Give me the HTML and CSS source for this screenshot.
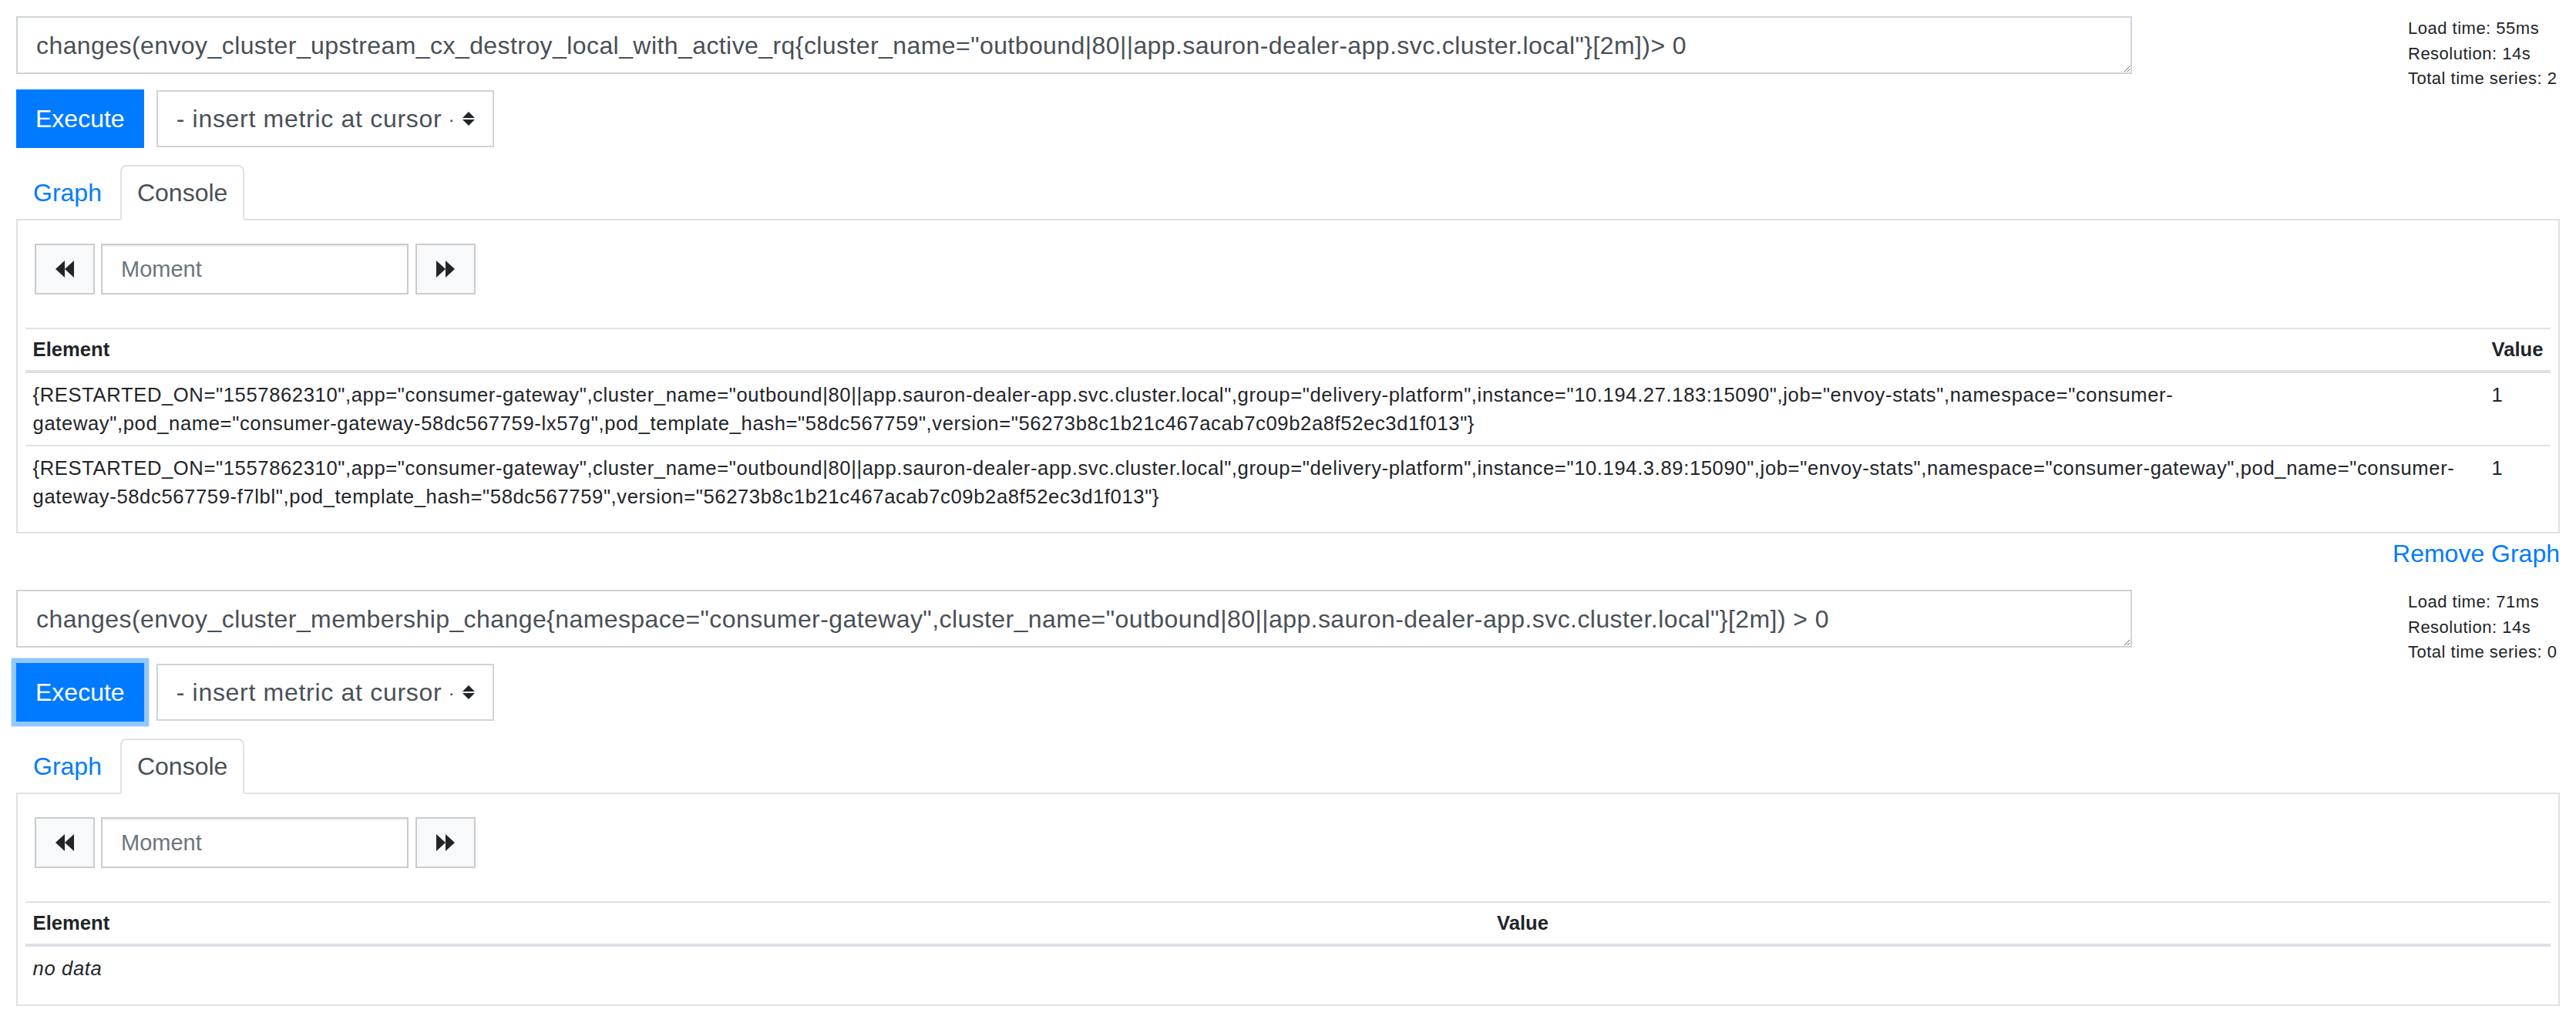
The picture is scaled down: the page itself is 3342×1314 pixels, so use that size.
FILE: index.html
```html
<!DOCTYPE html>
<html>
<head>
<meta charset="utf-8">
<title>Prometheus Time Series Collection and Processing Server</title>
<link rel="stylesheet" href="styles.css">
</head>
<body>
<div class="page">

  <div class="panel">
    <div class="query-row">
      <textarea class="expr" rows="1" spellcheck="false">changes(envoy_cluster_upstream_cx_destroy_local_with_active_rq{cluster_name="outbound|80||app.sauron-dealer-app.svc.cluster.local"}[2m])&gt; 0</textarea>
      <div class="stats">
        <div>Load time: 55ms</div>
        <div>Resolution: 14s</div>
        <div>Total time series: 2</div>
      </div>
    </div>
    <div class="controls">
      <button class="execute">Execute</button>
      <div class="metric-select">
        <span class="select-label">- insert metric at cursor -</span>
        <svg class="select-arrows" width="16" height="18" viewBox="0 0 16 18"><path d="M8 0 L16 8 L0 8 Z M0 10 L16 10 L8 18 Z" fill="#212529"/></svg>
      </div>
    </div>
    <ul class="tabs">
      <li><a class="tab">Graph</a></li>
      <li><a class="tab active">Console</a></li>
    </ul>
    <div class="tab-content">
      <div class="moment-group">
        <button class="moment-btn" aria-label="back">
          <svg width="24" height="22" viewBox="0 0 24 22"><path d="M0 11 L12 0 L12 22 Z M12 11 L24 0 L24 22 Z" fill="#212529"/></svg>
        </button>
        <input class="moment-input" placeholder="Moment">
        <button class="moment-btn" aria-label="forward">
          <svg width="24" height="22" viewBox="0 0 24 22"><path d="M0 0 L12 11 L0 22 Z M12 0 L24 11 L12 22 Z" fill="#212529"/></svg>
        </button>
      </div>
      <table class="data-table">
        <thead>
          <tr><th>Element</th><th>Value</th></tr>
        </thead>
        <tbody>
          <tr>
            <td>{RESTARTED_ON="1557862310",app="consumer-gateway",cluster_name="outbound|80||app.sauron-dealer-app.svc.cluster.local",group="delivery-platform",instance="10.194.27.183:15090",job="envoy-stats",namespace="consumer-gateway",pod_name="consumer-gateway-58dc567759-lx57g",pod_template_hash="58dc567759",version="56273b8c1b21c467acab7c09b2a8f52ec3d1f013"}</td>
            <td>1</td>
          </tr>
          <tr>
            <td>{RESTARTED_ON="1557862310",app="consumer-gateway",cluster_name="outbound|80||app.sauron-dealer-app.svc.cluster.local",group="delivery-platform",instance="10.194.3.89:15090",job="envoy-stats",namespace="consumer-gateway",pod_name="consumer-gateway-58dc567759-f7lbl",pod_template_hash="58dc567759",version="56273b8c1b21c467acab7c09b2a8f52ec3d1f013"}</td>
            <td>1</td>
          </tr>
        </tbody>
      </table>
    </div>
    <div class="remove-row"><a class="remove-link">Remove Graph</a></div>
  </div>

  <div class="panel">
    <div class="query-row">
      <textarea class="expr" rows="1" spellcheck="false">changes(envoy_cluster_membership_change{namespace="consumer-gateway",cluster_name="outbound|80||app.sauron-dealer-app.svc.cluster.local"}[2m]) &gt; 0</textarea>
      <div class="stats">
        <div>Load time: 71ms</div>
        <div>Resolution: 14s</div>
        <div>Total time series: 0</div>
      </div>
    </div>
    <div class="controls">
      <button class="execute focused">Execute</button>
      <div class="metric-select">
        <span class="select-label">- insert metric at cursor -</span>
        <svg class="select-arrows" width="16" height="18" viewBox="0 0 16 18"><path d="M8 0 L16 8 L0 8 Z M0 10 L16 10 L8 18 Z" fill="#212529"/></svg>
      </div>
    </div>
    <ul class="tabs">
      <li><a class="tab">Graph</a></li>
      <li><a class="tab active">Console</a></li>
    </ul>
    <div class="tab-content">
      <div class="moment-group">
        <button class="moment-btn" aria-label="back">
          <svg width="24" height="22" viewBox="0 0 24 22"><path d="M0 11 L12 0 L12 22 Z M12 11 L24 0 L24 22 Z" fill="#212529"/></svg>
        </button>
        <input class="moment-input" placeholder="Moment">
        <button class="moment-btn" aria-label="forward">
          <svg width="24" height="22" viewBox="0 0 24 22"><path d="M0 0 L12 11 L0 22 Z M12 0 L24 11 L12 22 Z" fill="#212529"/></svg>
        </button>
      </div>
      <table class="data-table">
        <thead>
          <tr><th>Element</th><th>Value</th></tr>
        </thead>
        <tbody>
          <tr><td class="no-data">no data</td><td></td></tr>
        </tbody>
      </table>
    </div>
  </div>

</div>
</body>
</html>
```

FILE: styles.css
```css
* {
  box-sizing: border-box;
}

body {
  margin: 0;
  background: #fff;
  color: #212529;
  font-family: "Liberation Sans", Arial, Helvetica, sans-serif;
}

.page {
  padding: 21px 21px 0;
}

.panel {
  margin-bottom: 23px;
}

.query-row {
  display: flex;
  align-items: flex-start;
}

.expr {
  display: block;
  width: 2745px;
  height: 75px;
  margin: 0;
  padding: 12px 24px;
  border: 2px solid #ced4da;
  border-radius: 0;
  font-family: "Liberation Sans", Arial, Helvetica, sans-serif;
  font-size: 32px;
  line-height: 48px;
  letter-spacing: 0.42px;
  color: #495057;
  background: #fff;
  overflow: hidden;
  resize: vertical;
  outline: none;
}

.stats {
  margin-left: auto;
  margin-bottom: -23px;
  width: 197px;
  font-size: 22px;
  line-height: 32.5px;
  letter-spacing: 0.5px;
  white-space: nowrap;
  color: #212529;
}

.controls {
  display: flex;
  align-items: center;
  gap: 16px;
  margin-top: 20px;
}

.execute {
  margin: 0;
  height: 76px;
  padding: 12px 23px;
  border: 2px solid #007bff;
  border-radius: 0;
  background: #007bff;
  color: #fff;
  font-family: "Liberation Sans", Arial, Helvetica, sans-serif;
  font-size: 32px;
  line-height: 48px;
}

.execute.focused {
  box-shadow: 0 0 0 6.4px rgba(38, 143, 255, 0.5);
}

.metric-select {
  display: flex;
  align-items: center;
  width: 438px;
  height: 74px;
  padding-left: 24px;
  border: 2px solid #ced4da;
  background: #fff;
  color: #495057;
  font-size: 32px;
}

.select-label {
  width: 358px;
  overflow: hidden;
  white-space: nowrap;
  letter-spacing: 0.7px;
}

.select-arrows {
  margin-left: 13px;
}

.tabs {
  display: flex;
  list-style: none;
  margin: 22px 0 0;
  padding: 0;
  border-bottom: 2px solid #dee2e6;
}

.tabs li {
  margin-right: 2px;
}

.tab {
  display: block;
  margin-bottom: -2px;
  padding: 10px 20px;
  border: 2px solid transparent;
  border-radius: 8px 8px 0 0;
  font-size: 32px;
  line-height: 48px;
  color: #007bff;
}

.tab.active {
  color: #495057;
  background: #fff;
  border-color: #dee2e6 #dee2e6 #fff;
}

.tab-content {
  padding: 10px;
  border: 2px solid #dee2e6;
  border-top: none;
}

.moment-group {
  display: flex;
  gap: 8px;
  margin: 20px 0 43px 12px;
}

.moment-btn {
  display: flex;
  align-items: center;
  justify-content: center;
  width: 78px;
  height: 66px;
  margin: 0;
  padding: 0;
  border: 2px solid #ccc;
  border-radius: 0;
  background: #f8f9fa;
}

.moment-input {
  width: 399px;
  height: 66px;
  margin: 0 1px 0 0;
  padding: 0 24px;
  border: 2px solid #ccc;
  border-radius: 0;
  box-shadow: inset 0 2px 2px rgba(0, 0, 0, 0.075);
  font-family: "Liberation Sans", Arial, Helvetica, sans-serif;
  font-size: 29px;
  color: #495057;
  outline: none;
}

.moment-input::placeholder {
  color: #6c757d;
}

.data-table {
  width: 100%;
  margin-bottom: 8px;
  border-collapse: collapse;
  font-size: 25.6px;
  line-height: 37px;
  color: #212529;
}

.data-table th {
  padding: 8px 9.6px;
  text-align: left;
  font-weight: bold;
  border-top: 2px solid #dee2e6;
  border-bottom: 4px solid #dee2e6;
}

.data-table td {
  padding: 9.6px;
  vertical-align: top;
  border-top: 2px solid #dee2e6;
  letter-spacing: 0.62px;
}

.data-table td.no-data {
  font-style: italic;
}

.remove-row {
  margin-top: 2px;
  text-align: right;
  font-size: 32px;
  line-height: 48px;
}

.remove-link {
  color: #007bff;
}
```
